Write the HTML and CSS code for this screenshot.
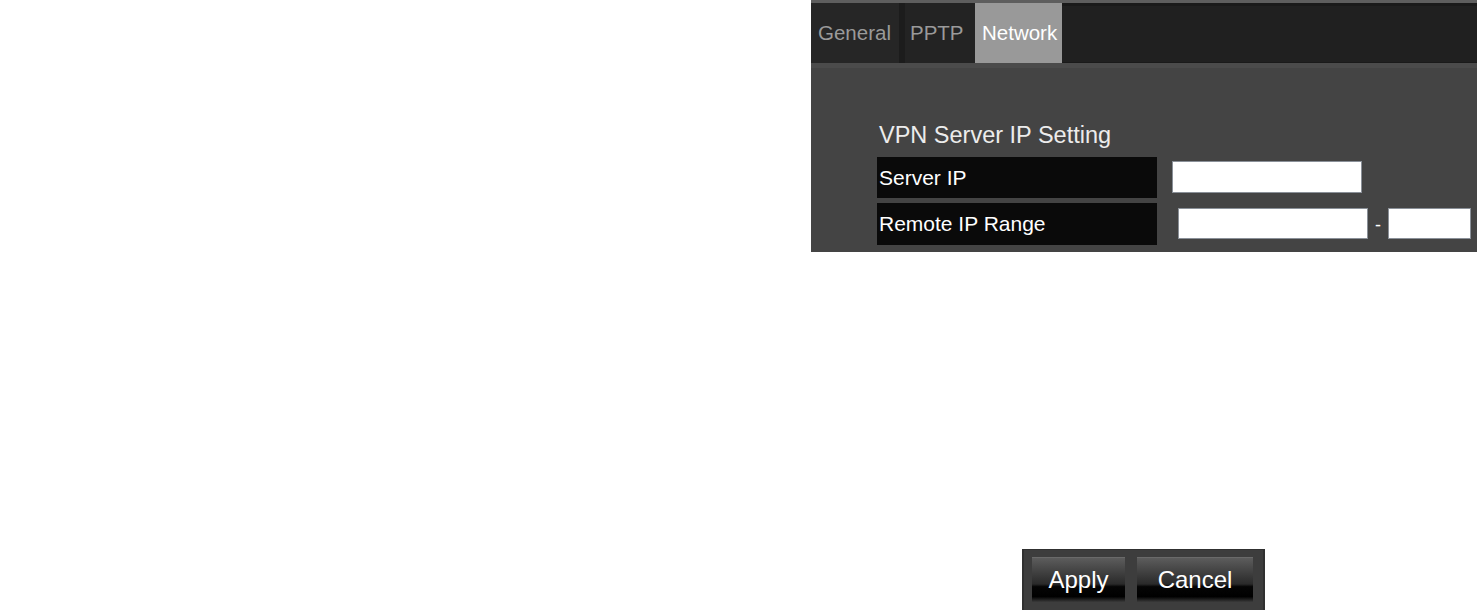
FILE: index.html
```html
<!DOCTYPE html>
<html>
<head>
<meta charset="utf-8">
<link rel="stylesheet" href="styles.css">
</head>
<body>
<div class="panel">
  <div class="tabbar">
    <div class="tab tab-general">General</div>
    <div class="tab tab-pptp">PPTP</div>
    <div class="tab tab-active">Network</div>
  </div>
  <div class="content">
    <div class="heading">VPN Server IP Setting</div>
    <div class="row row-1">
      <div class="label">Server IP</div>
      <input class="field field-server" type="text">
    </div>
    <div class="row row-2">
      <div class="label">Remote IP Range</div>
      <input class="field field-start" type="text">
      <span class="dash">-</span>
      <input class="field field-end" type="text">
    </div>
  </div>
</div>
<div class="actions">
  <button class="btn btn-apply">Apply</button>
  <button class="btn btn-cancel">Cancel</button>
</div>
</body>
</html>
```
FILE: styles.css
```css
html, body {
  margin: 0;
  padding: 0;
  background: #ffffff;
  font-family: "Liberation Sans", Arial, sans-serif;
  overflow: hidden;
}

.panel {
  margin-left: 811px;
  width: 666px;
  height: 252px;
  background: #444444;
}

.tabbar {
  display: flex;
  height: 60px;
  background: #202020;
  border-top: 3px solid #5e5e5e;
  box-shadow: inset 0 3px 0 #1a1a1a, inset 0 -1px 0 #1a1a1a;
  border-bottom: 5px solid #4b4b4b;
}

.tab {
  display: flex;
  align-items: center;
  font-size: 20.5px;
  color: #9a9a9a;
  padding: 0 7px;
  height: 60px;
}

.tab-general {
  width: 74px;
  background: #262626;
  border-right: 6px solid #1c1c1c;
}

.tab-pptp {
  width: 58px;
  padding: 0 7px 0 5px;
  background: #232323;
}

.tab-active {
  width: 73px;
  background: #999999;
  color: #ffffff;
}

.content {
  padding-left: 66px;
}

.heading {
  margin-top: 54px;
  padding-left: 2px;
  font-size: 23.5px;
  line-height: 26px;
  color: #ececec;
}

.row {
  display: flex;
  align-items: flex-start;
}

.row-1 {
  margin-top: 9px;
  height: 41px;
}

.row-2 {
  margin-top: 5px;
  height: 42px;
}

.label {
  width: 278px;
  height: 100%;
  padding-left: 2px;
  background: #0a0a0a;
  color: #ffffff;
  font-size: 21px;
  display: flex;
  align-items: center;
}

.field {
  box-sizing: border-box;
  background: #ffffff;
  border: 1px solid #8a9098;
  padding: 0;
  margin: 0;
  outline: none;
}

.field-server {
  margin-left: 15px;
  margin-top: 4px;
  width: 190px;
  height: 32px;
}

.field-start {
  margin-left: 21px;
  margin-top: 5px;
  width: 190px;
  height: 31px;
}

.dash {
  width: 20px;
  text-align: center;
  color: #ffffff;
  font-size: 18px;
  line-height: 20px;
  margin-top: 12px;
}

.field-end {
  margin-top: 5px;
  width: 83px;
  height: 31px;
}

.actions {
  margin-top: 297px;
  margin-left: 1022px;
  width: 243px;
  height: 61px;
  box-sizing: border-box;
  background: #3d3d3d;
  border-left: 2px solid #303030;
  border-right: 2px solid #303030;
  border-top: 1px solid #303030;
  padding: 7px 0 0 8px;
  display: flex;
  gap: 12px;
}

.btn {
  height: 45px;
  border: none;
  margin: 0;
  padding: 0;
  color: #ffffff;
  font-family: "Liberation Sans", Arial, sans-serif;
  font-size: 24px;
  background: linear-gradient(#5e5e5e 0%, #444444 30%, #2a2a2a 60%, #050505 66%, #000000 88%, #3a3a3a 100%);
  box-shadow: inset 0 1px 0 #6a6a6a;
}

.btn-apply {
  width: 93px;
}

.btn-cancel {
  width: 116px;
}
```
